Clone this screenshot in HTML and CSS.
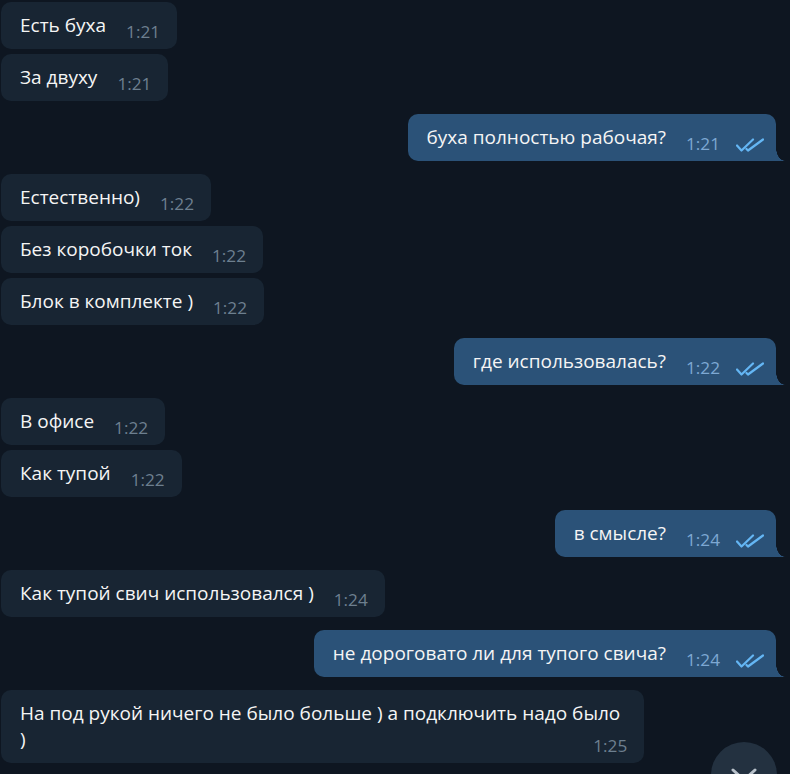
FILE: index.html
```html
<!DOCTYPE html>
<html lang="ru">
<head>
<meta charset="utf-8">
<title>Чат</title>
<link rel="stylesheet" href="styles.css">
</head>
<body>
<div class="chat">
  <div class="group in">
    <div class="msg"><span class="text">Есть буха</span><span class="time">1:21</span></div>
    <div class="msg"><span class="text">За двуху</span><span class="time">1:21</span></div>
  </div>
  <div class="group out">
    <div class="msg"><span class="text">буха полностью рабочая?</span><span class="time">1:21</span><svg class="checks" viewBox="0 0 28 14" width="28" height="14"><path d="M1 7.5 L5.5 12.5 L17 1.5 M10.5 11 L12 12.5 L27 1.5" fill="none" stroke="#64b6f4" stroke-width="2.2" stroke-linecap="round" stroke-linejoin="round"/></svg></div>
  </div>
  <div class="group in">
    <div class="msg"><span class="text">Естественно)</span><span class="time">1:22</span></div>
    <div class="msg"><span class="text">Без коробочки ток</span><span class="time">1:22</span></div>
    <div class="msg"><span class="text">Блок в комплекте )</span><span class="time">1:22</span></div>
  </div>
  <div class="group out">
    <div class="msg"><span class="text">где использовалась?</span><span class="time">1:22</span><svg class="checks" viewBox="0 0 28 14" width="28" height="14"><path d="M1 7.5 L5.5 12.5 L17 1.5 M10.5 11 L12 12.5 L27 1.5" fill="none" stroke="#64b6f4" stroke-width="2.2" stroke-linecap="round" stroke-linejoin="round"/></svg></div>
  </div>
  <div class="group in">
    <div class="msg"><span class="text">В офисе</span><span class="time">1:22</span></div>
    <div class="msg"><span class="text">Как тупой</span><span class="time">1:22</span></div>
  </div>
  <div class="group out">
    <div class="msg"><span class="text">в смысле?</span><span class="time">1:24</span><svg class="checks" viewBox="0 0 28 14" width="28" height="14"><path d="M1 7.5 L5.5 12.5 L17 1.5 M10.5 11 L12 12.5 L27 1.5" fill="none" stroke="#64b6f4" stroke-width="2.2" stroke-linecap="round" stroke-linejoin="round"/></svg></div>
  </div>
  <div class="group in">
    <div class="msg"><span class="text">Как тупой свич использовался )</span><span class="time">1:24</span></div>
  </div>
  <div class="group out">
    <div class="msg"><span class="text">не дороговато ли для тупого свича?</span><span class="time">1:24</span><svg class="checks" viewBox="0 0 28 14" width="28" height="14"><path d="M1 7.5 L5.5 12.5 L17 1.5 M10.5 11 L12 12.5 L27 1.5" fill="none" stroke="#64b6f4" stroke-width="2.2" stroke-linecap="round" stroke-linejoin="round"/></svg></div>
  </div>
  <div class="group in">
    <div class="msg multi"><span class="text">На под рукой ничего не было больше ) а подключить надо было<br>)</span><span class="time">1:25</span></div>
  </div>
</div>
<button class="scroll-down" aria-label="Вниз"><svg viewBox="0 0 26 16" width="26" height="16"><path d="M2 2 L13 12 L24 2" fill="none" stroke="#b8c1ca" stroke-width="3" stroke-linecap="round" stroke-linejoin="round"/></svg></button>
</body>
</html>
```
FILE: styles.css
```css
html, body {
  margin: 0;
  height: 100%;
}
body {
  background: #0e1621;
  font-family: "Open Sans", "Noto Sans", sans-serif;
  color: #f5f5f5;
  overflow: hidden;
  position: relative;
}
.chat {
  display: flex;
  flex-direction: column;
  gap: 13px;
  padding: 2px 14px 0 1px;
}
.group {
  display: flex;
  flex-direction: column;
  gap: 5px;
}
.group.in { align-items: flex-start; }
.group.out { align-items: flex-end; }

.msg {
  display: flex;
  align-items: flex-end;
  padding: 10px 17px 5px 19px;
  border-radius: 10px;
  background: #182533;
  position: relative;
}
.out .msg {
  background: #2b5278;
  padding-right: 12px;
  border-bottom-right-radius: 0;
}
.out .msg::after {
  content: "";
  position: absolute;
  right: -9px;
  bottom: 0;
  width: 9px;
  height: 13px;
  background: radial-gradient(ellipse 9px 13px at 100% 0, transparent 96%, #2b5278 100%);
}
.text {
  font-size: 19px;
  line-height: 26px;
  margin-bottom: 6px;
  white-space: nowrap;
}
.time {
  font-size: 17.2px;
  line-height: 24px;
  margin-left: 20px;
  color: #6d7f8f;
}
.out .time {
  color: #7da8d3;
}
.checks {
  margin-left: 16px;
  margin-bottom: 4px;
  flex: none;
}
.msg.multi {
  flex-direction: column;
  align-items: flex-end;
}
.msg.multi .text {
  align-self: flex-start;
  padding-right: 7px;
}
.msg.multi .time {
  margin-top: -24px;
}
.scroll-down {
  position: absolute;
  left: 711px;
  top: 742px;
  width: 66px;
  height: 66px;
  border-radius: 50%;
  border: none;
  padding: 26px 0 0;
  background: #233140;
  display: flex;
  justify-content: center;
  align-items: flex-start;
}
```
